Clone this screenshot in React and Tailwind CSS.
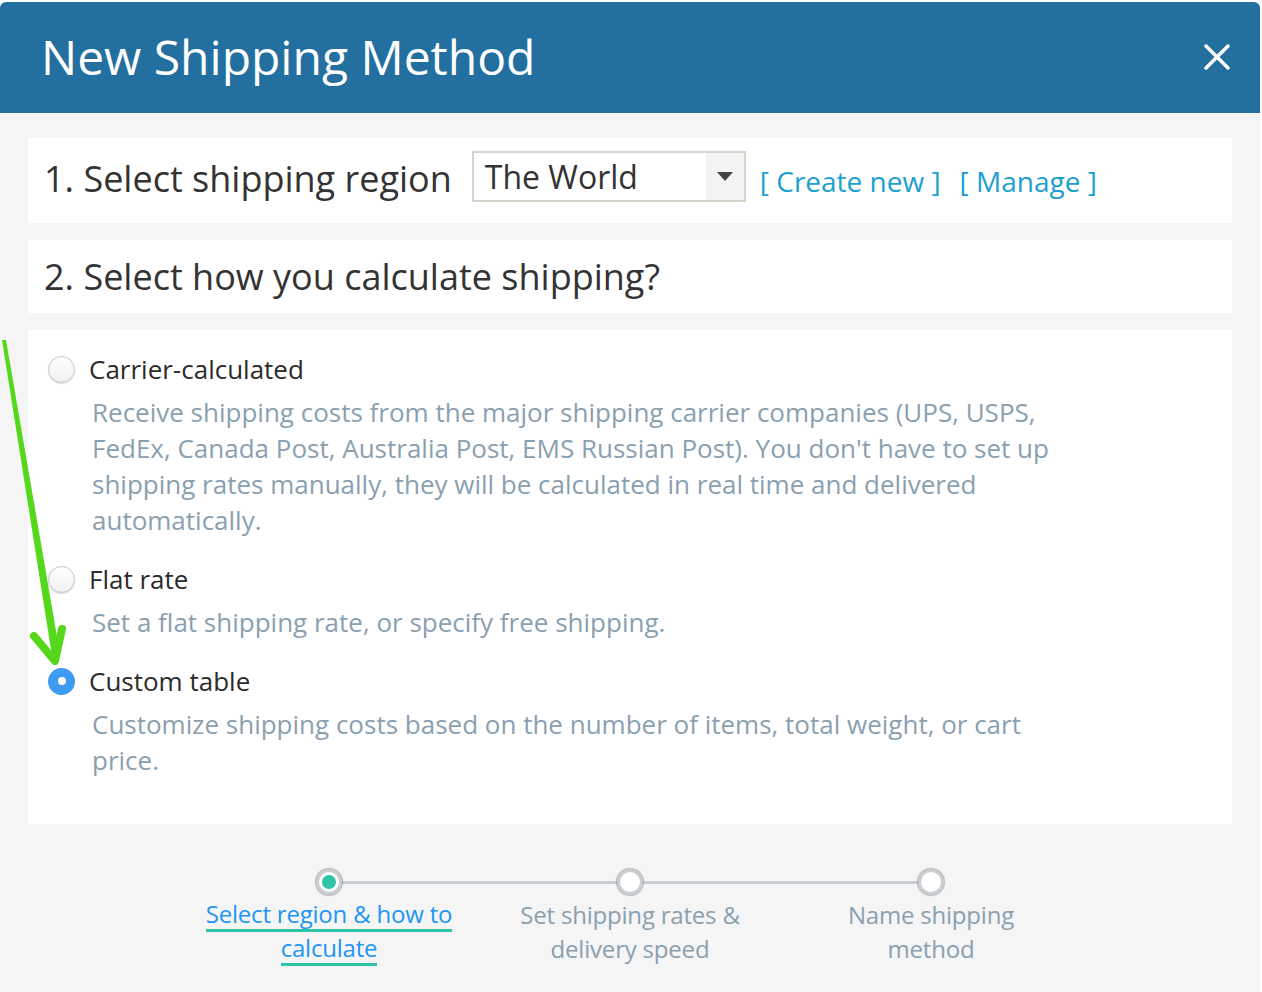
import React from "react";

const options = [
  {
    label: "Carrier-calculated",
    desc: "Receive shipping costs from the major shipping carrier companies (UPS, USPS, FedEx, Canada Post, Australia Post, EMS Russian Post). You don't have to set up shipping rates manually, they will be calculated in real time and delivered automatically.",
    checked: false,
  },
  {
    label: "Flat rate",
    desc: "Set a flat shipping rate, or specify free shipping.",
    checked: false,
  },
  {
    label: "Custom table",
    desc: "Customize shipping costs based on the number of items, total weight, or cart price.",
    checked: true,
  },
];

const steps = [
  { lines: ["Select region & how to", "calculate"], active: true },
  { lines: ["Set shipping rates &", "delivery speed"], active: false },
  { lines: ["Name shipping", "method"], active: false },
];

function Radio({ checked }) {
  if (checked) {
    return (
      <span className="w-[27px] h-[27px] rounded-full bg-[#3d9bf2] flex items-center justify-center shrink-0">
        <span className="w-[8px] h-[8px] rounded-full bg-white" />
      </span>
    );
  }
  return (
    <span className="w-[27px] h-[27px] rounded-full border border-[#c4c4c4] bg-gradient-to-b from-white to-[#f0f0f0] shadow-[0_1px_1px_rgba(0,0,0,0.15)] shrink-0" />
  );
}

export default function App() {
  return (
    <div className="w-[1262px] h-[992px] bg-white relative font-['Open_Sans',sans-serif] overflow-hidden">
      <div className="w-[1260px] h-[990px] mt-[2px] rounded-t-[6px] overflow-hidden bg-[#f5f5f5]">
        {/* header */}
        <div className="h-[111px] bg-[#2370a0] flex items-center justify-between pl-[41px] pr-[30px]">
          <h1 className="text-white text-[48px] leading-none pb-[2px]">New Shipping Method</h1>
          <svg width="26" height="26" viewBox="0 0 26 26" className="mb-[2px]">
            <path d="M2 2 L24 24 M24 2 L2 24" stroke="white" strokeWidth="3.5" strokeLinecap="round" />
          </svg>
        </div>

        <div className="px-[28px] pt-[25px]">
          {/* step 1 */}
          <div className="h-[85px] bg-white flex items-center pl-[16px]">
            <span className="text-[36px] text-[#333] mr-[20px] mb-[3px]">1. Select shipping region</span>
            <div className="w-[274px] h-[51px] mb-[8px] border-2 border-[#d6d3c9] flex items-stretch">
              <span className="flex-1 flex items-center pl-[11px] text-[32px] text-[#333]">The World</span>
              <span className="w-[38px] bg-[#f4f4f4] flex items-center justify-center">
                <svg width="16" height="9" viewBox="0 0 16 9">
                  <path d="M0 0 H16 L8 9 Z" fill="#444" />
                </svg>
              </span>
            </div>
            <span className="text-[28px] text-[#1ba0d0] ml-[14px]">[ Create new ]</span>
            <span className="text-[28px] text-[#1ba0d0] ml-[19px]">[ Manage ]</span>
          </div>

          {/* step 2 */}
          <div className="h-[73px] mt-[17px] bg-white flex items-center pl-[16px]">
            <span className="text-[36px] text-[#333]">2. Select how you calculate shipping?</span>
          </div>

          {/* options */}
          <div className="mt-[17px] bg-white pt-[21px] pb-[46px] pl-[20px] flex flex-col gap-[23px]">
            {options.map((o) => (
              <div key={o.label}>
                <div className="flex items-center gap-[14px] h-[36px]">
                  <Radio checked={o.checked} />
                  <span className="text-[26px] text-[#2b2b2b]">{o.label}</span>
                </div>
                <p className="mt-[7px] ml-[44px] max-w-[975px] text-[26px] leading-[36px] text-[#8aa0b1]">
                  {o.desc}
                </p>
              </div>
            ))}
          </div>

          {/* stepper */}
          <div className="relative mt-[45px] flex justify-center">
            <div className="absolute top-[12px] left-[299px] w-[602px] h-[3px] bg-[#c9ced3]" />
            {steps.map((s, i) => (
              <div key={i} className="w-[301px] flex flex-col items-center relative">
                <span className="w-[26px] h-[26px] rounded-full border-[3px] border-[#c9ced3] bg-white shadow-[0_0_1px_1px_rgba(0,0,0,0.25)] flex items-center justify-center">
                  {s.active && <span className="w-[14px] h-[14px] rounded-full bg-[#2ec4a6]" />}
                </span>
                <div className="mt-[3px] flex flex-col items-center">
                  {s.lines.map((l) =>
                    s.active ? (
                      <span
                        key={l}
                        className="text-[24px] leading-[28px] pt-[2px] pb-[1px] text-[#2196f3] border-b-[3px] border-[#2ec4a6] tracking-[-0.2px]"
                      >
                        {l}
                      </span>
                    ) : (
                      <span key={l} className="text-[24px] leading-[34px] text-[#8aa0b1] tracking-[-0.2px]">
                        {l}
                      </span>
                    )
                  )}
                </div>
              </div>
            ))}
          </div>
        </div>
      </div>

      {/* green annotation arrow */}
      <svg className="absolute left-0 top-0 pointer-events-none" width="120" height="720" viewBox="0 0 120 720">
        <path d="M2 340 L6 340 L60 654 L52 656 Z" fill="#55d81c" />
        <path d="M34 636 L55 661 L62 629" stroke="#55d81c" strokeWidth="8" fill="none" strokeLinecap="round" strokeLinejoin="round" />
      </svg>
    </div>
  );
}
